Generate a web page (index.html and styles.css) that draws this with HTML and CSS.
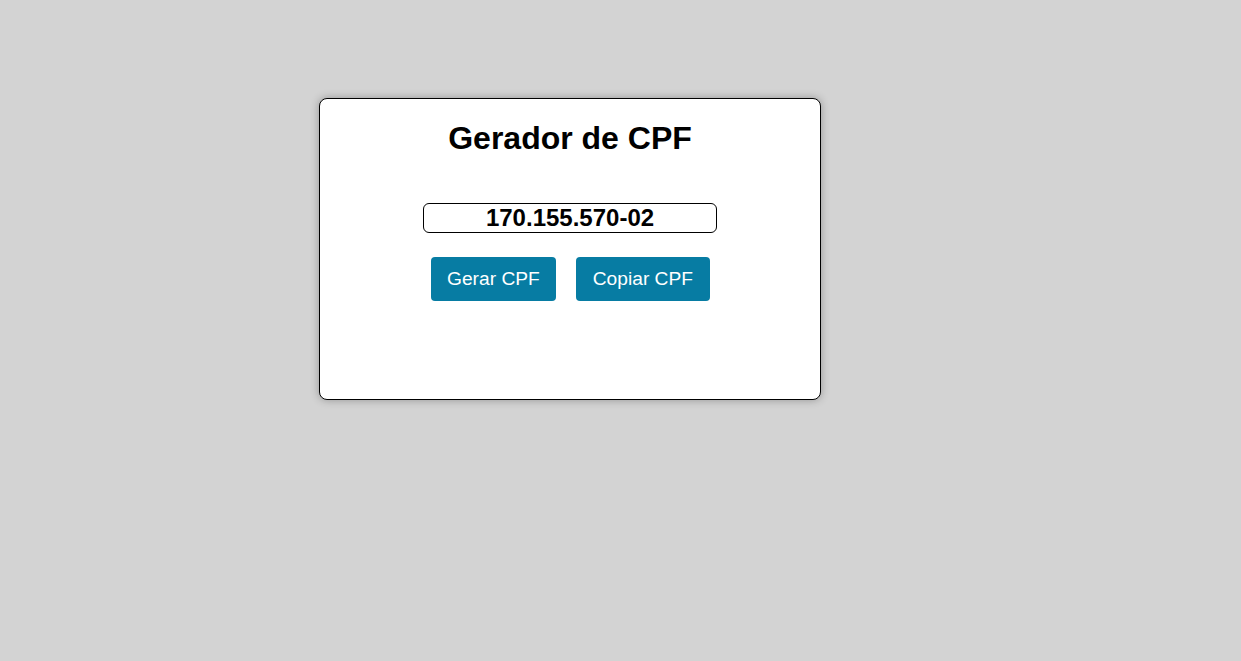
FILE: index.html
```html
<!DOCTYPE html>
<html lang="pt-BR">
<head>
<meta charset="utf-8">
<title>Gerador de CPF</title>
<link rel="stylesheet" href="styles.css">
</head>
<body>
  <main class="card">
    <h1 class="title">Gerador de CPF</h1>
    <input class="cpf" type="text" value="170.155.570-02" readonly>
    <div class="actions">
      <button class="btn" type="button">Gerar CPF</button>
      <button class="btn" type="button">Copiar CPF</button>
    </div>
  </main>
</body>
</html>
```
FILE: styles.css
```css
html, body {
  margin: 0;
  padding: 0;
}
body {
  background: #d3d3d3;
  font-family: "Liberation Sans", Arial, sans-serif;
  min-height: 661px;
  padding: 98px 0 0 319px;
  box-sizing: border-box;
}
.card {
  width: 502px;
  height: 302px;
  box-sizing: border-box;
  background: #fff;
  border: 1px solid #000;
  border-radius: 8px;
  box-shadow: 0 0 8px rgba(0, 0, 0, 0.3);
  display: flex;
  flex-direction: column;
  align-items: center;
}
.title {
  font-size: 32px;
  font-weight: bold;
  margin: 21px 0 0;
  line-height: 37px;
  color: #000;
}
.cpf {
  margin-top: 46px;
  width: 294px;
  height: 30px;
  box-sizing: border-box;
  border: 1px solid #000;
  border-radius: 6px;
  padding: 0 2px;
  font-family: "Liberation Sans", Arial, sans-serif;
  font-size: 24px;
  font-weight: bold;
  text-align: center;
  color: #000;
  background: #fff;
  outline: none;
}
.actions {
  display: flex;
  gap: 20px;
  margin-top: 24px;
}
.btn {
  height: 44px;
  padding: 0 16.5px;
  border: none;
  border-radius: 4px;
  background: #077ca3;
  color: #fff;
  font-family: "Liberation Sans", Arial, sans-serif;
  font-size: 19.2px;
  cursor: pointer;
}
```
